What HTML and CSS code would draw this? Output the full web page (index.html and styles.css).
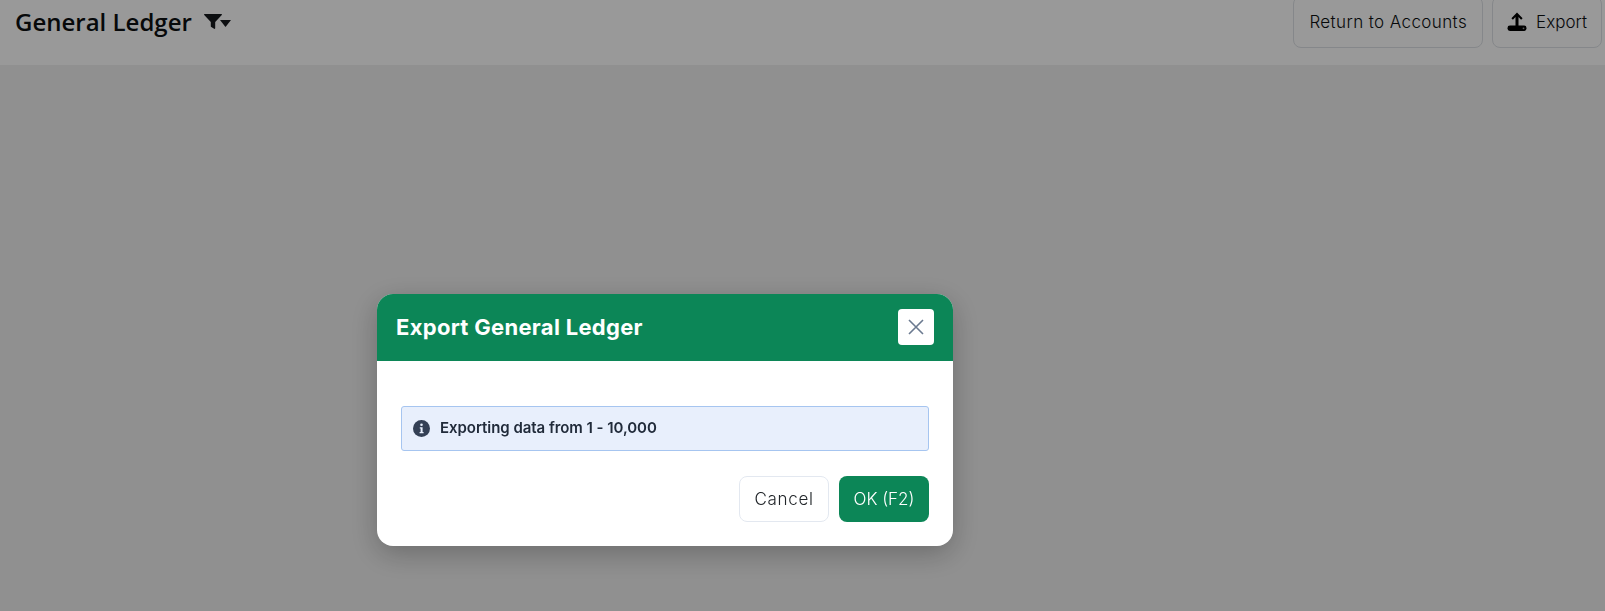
FILE: index.html
```html
<!DOCTYPE html>
<html lang="en">
<head>
  <meta charset="UTF-8">
  <title>General Ledger</title>
  <link rel="stylesheet" href="styles.css">
</head>
<body>

  <!-- page behind the dialog -->
  <div class="page">
    <header class="topbar">
      <div class="topbar-left">
        <h1 class="page-title">General Ledger</h1>
        <button class="filter-btn" type="button" aria-label="Filter">
          <svg width="18" height="15" viewBox="0 0 18 15"><path d="M0.6 0h16.8c.5 0 .8.6.4 1L11.2 8v6.2c0 .6-.6.9-1.1.6L7.3 13c-.3-.2-.5-.5-.5-.8V8L.2 1C-.2.6.1 0 .6 0z"/></svg>
          <svg width="11" height="7" viewBox="0 0 11 7"><path d="M0 0h11L5.500 7z"/></svg>
        </button>
      </div>
      <div class="topbar-actions">
        <button class="btn-outline" type="button">Return to Accounts</button>
        <button class="btn-outline btn-export" type="button">
          <svg class="export-icon" width="20" height="20" viewBox="0 0 20 20">
            <path d="M10 0.500l5.600 5.700-1.500 1.500-2.600-2.600v9h-3v-9L5.900 7.700 4.400 6.200z"/>
            <rect x="0.500" y="13.500" width="19" height="5.500" rx="2.400"/>
            <circle cx="16.500" cy="16.300" r="0.900" fill="#999"/>
          </svg>
          Export
        </button>
      </div>
    </header>
  </div>

  <!-- export dialog -->
  <div class="backdrop">
    <div class="modal">
      <div class="modal-header">
        <h2 class="modal-title">Export General Ledger</h2>
        <button class="modal-close" type="button" aria-label="Close">
          <svg width="16" height="16" viewBox="0 0 16 16"><path d="M1 1l14 14M15 1L1 15" fill="none" stroke="#6b7a90" stroke-width="1.600"/></svg>
        </button>
      </div>
      <div class="modal-body">
        <div class="alert-info">
          <svg width="17" height="17" viewBox="0 0 17 17">
            <circle cx="8.500" cy="8.500" r="8.500" fill="#344055"/>
            <circle cx="8.500" cy="4.800" r="1.300" fill="#e8effc"/>
            <path d="M6.800 7.200h2.800v4.700h1v1.300H6.600v-1.300h1V8.500h-.8z" fill="#e8effc"/>
          </svg>
          <span>Exporting data from 1 - 10,000</span>
        </div>
        <div class="modal-footer">
          <button class="btn-cancel" type="button">Cancel</button>
          <button class="btn-ok" type="button">OK (F2)</button>
        </div>
      </div>
    </div>
  </div>

</body>
</html>
```
FILE: styles.css
```css
/* page */
html, body {
  height: 100%;
}

body {
  margin: 0;
  overflow: hidden;
  background-color: #f0f0f0;
  font-family: "Inter", "Liberation Sans", sans-serif;
}

button {
  font-family: inherit;
  cursor: pointer;
}

/* top bar, scrolled a little past its top edge */
.topbar {
  display: flex;
  justify-content: space-between;
  align-items: flex-start;
  height: 69px;
  margin-top: -4px;
  padding: 0 3px 0 15px;
  box-sizing: border-box;
  background-color: #ffffff;
}

.topbar-left {
  display: flex;
  align-items: center;
  gap: 12px;
  height: 50px;
}

.page-title {
  margin: 0;
  color: #0c0f12;
  font-family: "Open Sans", sans-serif;
  font-size: 24px;
  font-weight: 600;
}

.filter-btn {
  display: flex;
  align-items: center;
  margin-top: 1px;
  padding: 0;
  border: 0;
  background: none;
  fill: #16191d;
}

.filter-btn svg:last-child {
  margin: 3px 0 0 -2px;
}

.topbar-actions {
  display: flex;
  gap: 9px;
}

.btn-outline {
  display: flex;
  align-items: center;
  height: 52px;
  padding: 0 15px;
  border: 1px solid #dee2e6;
  border-radius: 8px;
  background: #ffffff;
  color: #0c0f12;
  font-size: 17px;
  font-weight: 300;
  letter-spacing: 0.4px;
}

.btn-export {
  gap: 9px;
  padding: 0 14px;
  letter-spacing: 0;
}

.export-icon {
  fill: #000000;
}

/* dialog */
.backdrop {
  position: fixed;
  top: 0;
  right: 0;
  bottom: 0;
  left: 0;
  padding: 294px 0 0 377px;
  background-color: rgba(0, 0, 0, 0.4);
}

.modal {
  width: 576px;
  height: 252px;
  border-radius: 16px;
  overflow: hidden;
  background: #ffffff;
  box-shadow: 0 8px 28px rgba(0, 0, 0, 0.25);
}

.modal-header {
  display: flex;
  justify-content: space-between;
  align-items: center;
  height: 67px;
  padding: 0 19px;
  box-sizing: border-box;
  background-color: #0c8657;
}

.modal-title {
  margin: -2px 0 0;
  color: #ffffff;
  font-size: 22px;
  font-weight: 700;
  letter-spacing: 0.3px;
}

.modal-close {
  display: flex;
  justify-content: center;
  align-items: center;
  width: 36px;
  height: 36px;
  margin-top: -2px;
  padding: 0;
  border: 0;
  border-radius: 4px;
  background: #ffffff;
}

.modal-body {
  padding: 45px 24px 0;
}

.alert-info {
  display: flex;
  align-items: center;
  gap: 10px;
  height: 45px;
  padding: 0 11px;
  box-sizing: border-box;
  border: 1px solid #a6c5f0;
  border-radius: 3px;
  background-color: #e8effc;
  color: #212b3a;
  font-size: 15px;
  font-weight: 600;
  letter-spacing: -0.05px;
}

.alert-info span {
  margin-top: -2px;
}

.modal-footer {
  display: flex;
  justify-content: flex-end;
  gap: 10px;
  margin-top: 25px;
}

.btn-cancel,
.btn-ok {
  width: 90px;
  height: 46px;
  padding: 0;
  border-radius: 8px;
  font-size: 17px;
  font-weight: 300;
}

.btn-cancel {
  border: 1px solid #e3e8f0;
  background: #ffffff;
  color: #212529;
  letter-spacing: 0.7px;
}

.btn-ok {
  border: 0;
  background-color: #0c8657;
  color: #ffffff;
}
```
